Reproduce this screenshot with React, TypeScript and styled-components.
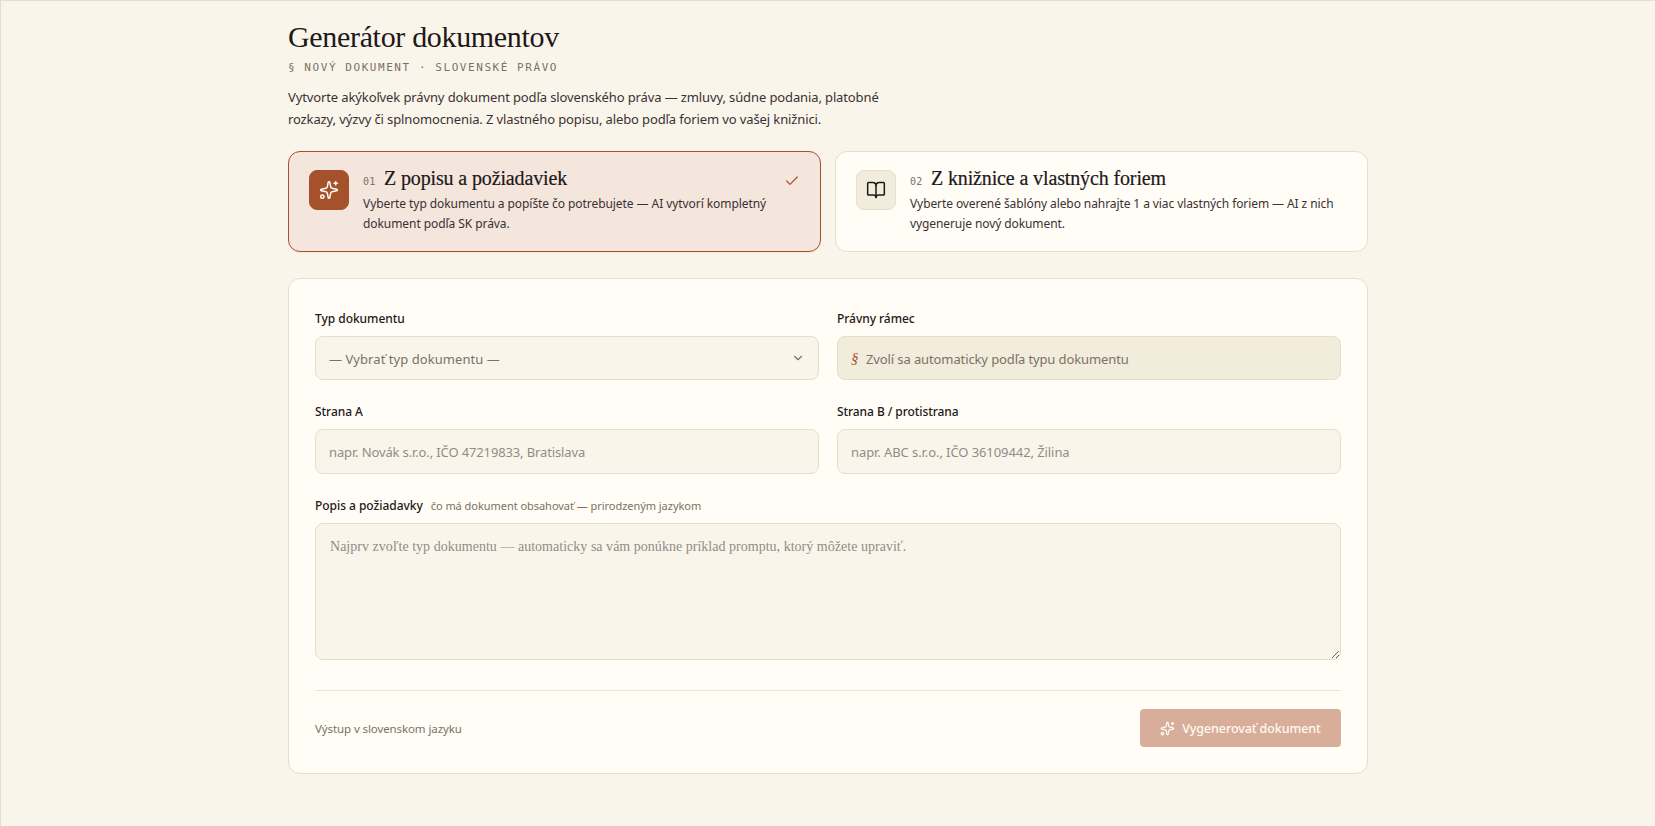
import React from 'react';
import styled, { createGlobalStyle } from 'styled-components';
import { BookOpen, Check, ChevronDown, Sparkles } from 'lucide-react';

const color = {
  paper: '#faf5eb',
  surface: '#fffdf6',
  sunken: '#f2ecdd',
  line: '#e5dec9',
  lineSoft: '#ece6d2',
  ink: '#1f1819',
  inkSoft: '#3a3133',
  muted: '#7b7265',
  faint: '#938b86',
  accent: '#a5512b',
  accentSoft: '#f4e6dc',
};

const sans = `'Noto Sans', 'Open Sans', sans-serif`;
const serif = `'Liberation Serif', 'Times New Roman', serif`;
const mono = `'DejaVu Sans Mono', 'Liberation Mono', monospace`;

const GlobalStyle = createGlobalStyle`
  *, *::before, *::after { box-sizing: border-box; }
  body { margin: 0; background: ${color.paper}; }
`;

const Page = styled.main`
  min-height: 826px;
  border-top: 1px solid ${color.line};
  border-left: 1px solid ${color.line};
  background: ${color.paper};
  color: ${color.ink};
  font-family: ${sans};
  padding-top: 18px;
`;

const Column = styled.div`
  width: 1080px;
  margin: 0 auto;
`;

const Title = styled.h1`
  margin: 0;
  font: 400 30px/36px ${serif};
  letter-spacing: -0.33px;
`;

const Eyebrow = styled.p`
  margin: 5px 0 0;
  font: 400 11px/16px ${mono};
  letter-spacing: 1.56px;
  text-transform: uppercase;
  color: ${color.muted};
`;

const Intro = styled.p`
  margin: 10px 0 0;
  width: 600px;
  font-size: 13px;
  line-height: 22px;
  letter-spacing: -0.118px;
  color: ${color.inkSoft};
`;

const Modes = styled.div`
  display: grid;
  grid-template-columns: 1fr 1fr;
  gap: 14px;
  margin-top: 21px;
`;

const ModeCard = styled.div<{ $active?: boolean }>`
  display: flex;
  gap: 14px;
  height: 101px;
  padding: 18px 20px;
  border: 1px solid ${(p) => (p.$active ? color.accent : color.line)};
  border-radius: 12px;
  background: ${(p) => (p.$active ? color.accentSoft : color.surface)};
  box-shadow: ${(p) => (p.$active ? '0 1px 2px rgba(80, 50, 20, 0.06)' : 'none')};
`;

const ModeIcon = styled.span<{ $active?: boolean }>`
  display: flex;
  flex: none;
  align-items: center;
  justify-content: center;
  width: 40px;
  height: 40px;
  border: 1px solid ${(p) => (p.$active ? color.accent : color.line)};
  border-radius: 8px;
  background: ${(p) => (p.$active ? color.accent : color.sunken)};
  color: ${(p) => (p.$active ? color.surface : color.ink)};
`;

const ModeText = styled.div`
  flex: 1;
  min-width: 0;
  margin-top: -2px;
`;

const ModeHeading = styled.div`
  display: flex;
  align-items: baseline;
  gap: 8.5px;
  height: 20px;
`;

const ModeNumber = styled.span`
  font: 400 10px/20px ${mono};
  letter-spacing: 0.2px;
  color: ${color.muted};
`;

const ModeTitle = styled.h2`
  margin: 0;
  font: 400 20px/20px ${serif};
  letter-spacing: -0.13px;
  -webkit-text-stroke: 0.2px currentColor;
`;

const ModeDescription = styled.p<{ $tracking: number }>`
  margin: 6px 0 0;
  font-size: 12px;
  line-height: 20px;
  letter-spacing: ${(p) => p.$tracking}px;
  white-space: nowrap;
  color: ${color.inkSoft};
`;

const ModeCheck = styled(Check)`
  flex: none;
  margin-top: 3px;
  color: ${color.accent};
`;

const Panel = styled.form`
  height: 496px;
  margin-top: 26px;
  padding: 31px 26px 26px;
  border: 1px solid ${color.line};
  border-radius: 12px;
  background: ${color.surface};
`;

const FieldGrid = styled.div`
  display: grid;
  grid-template-columns: 1fr 1fr;
  gap: 23px 18px;
`;

const Field = styled.div<{ $wide?: boolean }>`
  display: flex;
  flex-direction: column;
  gap: 8px;
  grid-column: ${(p) => (p.$wide ? '1 / -1' : 'auto')};
`;

const Label = styled.label<{ $tracking?: number }>`
  display: flex;
  align-items: baseline;
  gap: 8px;
  height: 18px;
  font-size: 12px;
  font-weight: 500;
  line-height: 18px;
  letter-spacing: ${(p) => p.$tracking ?? -0.04}px;
`;

const Hint = styled.span`
  font-size: 11px;
  font-weight: 400;
  letter-spacing: -0.04px;
  color: ${color.muted};
`;

const SelectBox = styled.button`
  display: flex;
  align-items: center;
  justify-content: space-between;
  height: 44px;
  padding: 0 13px;
  border: 1px solid ${color.line};
  border-radius: 8px;
  background: ${color.paper};
  color: ${color.muted};
  font: 400 13px/20px ${sans};
  letter-spacing: 0.06px;
`;

const SelectValue = styled.span`
  padding-top: 2px;
`;

const Framework = styled.div`
  display: flex;
  align-items: center;
  gap: 7px;
  height: 44px;
  padding: 0 13px;
  border: 1px solid ${color.line};
  border-radius: 8px;
  background: ${color.sunken};
  color: ${color.muted};
  font-size: 13px;
  line-height: 20px;
  letter-spacing: -0.11px;
`;

const Section = styled.span`
  width: 8px;
  font: italic 400 15px/20px ${serif};
  color: ${color.accent};
`;

const TextInput = styled.input<{ $tracking: number }>`
  height: 45px;
  padding: 1px 13px 0;
  border: 1px solid ${color.line};
  border-radius: 8px;
  outline: none;
  background: ${color.paper};
  font: 400 13px/20px ${sans};
  letter-spacing: ${(p) => p.$tracking}px;

  &::placeholder { color: ${color.faint}; opacity: 1; }
`;

const PromptArea = styled.textarea`
  display: block;
  height: 137px;
  padding: 12px 14px;
  border: 1px solid ${color.line};
  border-radius: 8px;
  outline: none;
  resize: vertical;
  background: ${color.paper};
  font: 400 14px/22px ${serif};
  letter-spacing: 0.022px;

  &::placeholder { color: ${color.faint}; opacity: 1; }
`;

const Footer = styled.div`
  display: flex;
  align-items: center;
  justify-content: space-between;
  margin-top: 30px;
  padding-top: 18px;
  border-top: 1px solid ${color.lineSoft};
`;

const OutputNote = styled.span`
  padding-top: 2px;
  font-size: 11.5px;
  line-height: 20px;
  letter-spacing: -0.1px;
  color: ${color.muted};
`;

const SubmitButton = styled.button`
  display: flex;
  align-items: center;
  justify-content: center;
  gap: 7px;
  width: 201px;
  height: 38px;
  padding: 0;
  border: 0;
  border-radius: 4px;
  background: #d8ae9a;
  color: #fffaf0;
  font: 500 12.5px/20px ${sans};
  letter-spacing: -0.09px;
  white-space: nowrap;
`;

const SubmitText = styled.span`
  padding-top: 2px;
`;

export default function App() {
  return (
    <>
      <GlobalStyle />
      <Page>
        <Column>
          <Title>Generátor dokumentov</Title>
          <Eyebrow>§ Nový dokument · Slovenské právo</Eyebrow>
          <Intro>
            Vytvorte akýkoľvek právny dokument podľa slovenského práva — zmluvy, súdne podania, platobné
            rozkazy, výzvy či splnomocnenia. Z vlastného popisu, alebo podľa foriem vo vašej knižnici.
          </Intro>

          <Modes>
            <ModeCard $active>
              <ModeIcon $active>
                <Sparkles size={20} strokeWidth={1.8} />
              </ModeIcon>
              <ModeText>
                <ModeHeading>
                  <ModeNumber>01</ModeNumber>
                  <ModeTitle>Z popisu a požiadaviek</ModeTitle>
                </ModeHeading>
                <ModeDescription $tracking={-0.068}>
                  Vyberte typ dokumentu a popíšte čo potrebujete — AI vytvorí kompletný
                  <br />
                  dokument podľa SK práva.
                </ModeDescription>
              </ModeText>
              <ModeCheck size={16} strokeWidth={1.8} />
            </ModeCard>
            <ModeCard>
              <ModeIcon>
                <BookOpen size={20} strokeWidth={1.8} />
              </ModeIcon>
              <ModeText>
                <ModeHeading>
                  <ModeNumber>02</ModeNumber>
                  <ModeTitle>Z knižnice a vlastných foriem</ModeTitle>
                </ModeHeading>
                <ModeDescription $tracking={-0.09}>
                  Vyberte overené šablóny alebo nahrajte 1 a viac vlastných foriem — AI z nich
                  <br />
                  vygeneruje nový dokument.
                </ModeDescription>
              </ModeText>
            </ModeCard>
          </Modes>

          <Panel>
            <FieldGrid>
              <Field>
                <Label>Typ dokumentu</Label>
                <SelectBox type="button">
                  <SelectValue>— Vybrať typ dokumentu —</SelectValue>
                  <ChevronDown size={14} strokeWidth={2} />
                </SelectBox>
              </Field>
              <Field>
                <Label>Právny rámec</Label>
                <Framework>
                  <Section>§</Section>
                  <SelectValue>Zvolí sa automaticky podľa typu dokumentu</SelectValue>
                </Framework>
              </Field>
              <Field>
                <Label htmlFor="party-a">Strana A</Label>
                <TextInput id="party-a" $tracking={-0.13} placeholder="napr. Novák s.r.o., IČO 47219833, Bratislava" />
              </Field>
              <Field>
                <Label htmlFor="party-b" $tracking={-0.07}>Strana B / protistrana</Label>
                <TextInput id="party-b" $tracking={-0.08} placeholder="napr. ABC s.r.o., IČO 36109442, Žilina" />
              </Field>
              <Field $wide>
                <Label htmlFor="prompt">
                  Popis a požiadavky
                  <Hint>čo má dokument obsahovať — prirodzeným jazykom</Hint>
                </Label>
                <PromptArea
                  id="prompt"
                  placeholder="Najprv zvoľte typ dokumentu — automaticky sa vám ponúkne príklad promptu, ktorý môžete upraviť."
                />
              </Field>
            </FieldGrid>
            <Footer>
              <OutputNote>Výstup v slovenskom jazyku</OutputNote>
              <SubmitButton type="button">
                <Sparkles size={15} strokeWidth={2} />
                <SubmitText>Vygenerovať dokument</SubmitText>
              </SubmitButton>
            </Footer>
          </Panel>
        </Column>
      </Page>
    </>
  );
}
